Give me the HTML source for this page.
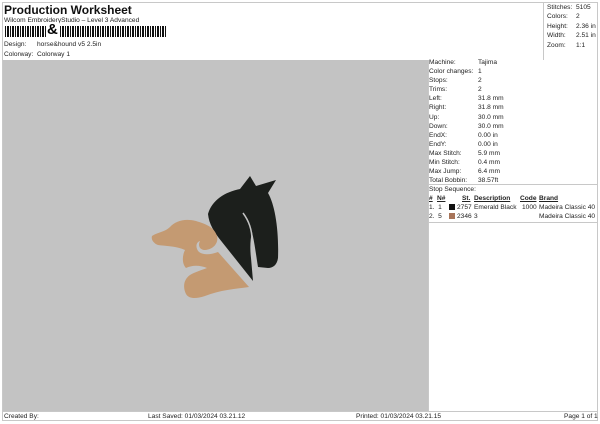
<!DOCTYPE html>
<html><head><style>
*{margin:0;padding:0;box-sizing:border-box}
body{width:600px;height:424px;background:#fff;font-family:"Liberation Sans",sans-serif;color:#222;position:relative;overflow:hidden;font-size:6.6px}
.a{position:absolute;white-space:nowrap}
</style></head><body>
<div class="a" style="left:2px;top:2px;width:596px;height:419px;border:1px solid #c8c8c8"></div>
<div class="a" style="left:543px;top:2px;width:1px;height:58px;background:#c8c8c8"></div>
<div class="a" style="left:4px;top:3px;font-size:12px;font-weight:bold;color:#111">Production Worksheet</div>
<div class="a" style="left:4px;top:17px;">Wilcom EmbroideryStudio – Level 3 Advanced</div>
<div class="a" style="left:5px;top:26px;width:162px;height:11px;background:repeating-linear-gradient(90deg,#111 0 1px,#fff 1px 2px,#111 2px 3px,#111 3px 4px,#fff 4px 5px)"></div>
<div class="a" style="left:47px;top:22px;width:12px;height:16px;background:#fff;font-size:15px;font-weight:bold;line-height:16px;color:#000">&amp;</div>
<div class="a" style="left:4px;top:41px;">Design:</div><div class="a" style="left:37px;top:41px;">horse&amp;hound v5 2.5in</div>
<div class="a" style="left:4px;top:51px;">Colorway:</div><div class="a" style="left:37px;top:51px;">Colorway 1</div>
<div class="a" style="left:547px;top:3px;line-height:9.4px">Stitches:<br>Colors:<br>Height:<br>Width:<br>Zoom:</div>
<div class="a" style="left:576px;top:3px;line-height:9.4px">5105<br>2<br>2.36 in<br>2.51 in<br>1:1</div>
<div class="a" style="left:3px;top:60px;width:425px;height:351px;background:#c3c3c3"></div>
<div class="a" style="left:428px;top:60px;width:1px;height:351px;background:#c8c8c8"></div>
<div class="a" style="left:3px;top:411px;width:594px;height:1px;background:#c8c8c8"></div>
<div class="a" style="left:429px;top:58px;line-height:9.1px">Machine:<br>Color changes:<br>Stops:<br>Trims:<br>Left:<br>Right:<br>Up:<br>Down:<br>EndX:<br>EndY:<br>Max Stitch:<br>Min Stitch:<br>Max Jump:<br>Total Bobbin:</div>
<div class="a" style="left:478px;top:58px;line-height:9.1px">Tajima<br>1<br>2<br>2<br>31.8 mm<br>31.8 mm<br>30.0 mm<br>30.0 mm<br>0.00 in<br>0.00 in<br>5.9 mm<br>0.4 mm<br>6.4 mm<br>38.57ft</div>
<div class="a" style="left:429px;top:184px;width:168px;height:1px;background:#c8c8c8"></div>
<div class="a" style="left:429px;top:186px;">Stop Sequence:</div>
<div class="a" style="left:429px;top:195px;font-weight:bold;text-decoration:underline">#</div>
<div class="a" style="left:437px;top:195px;font-weight:bold;text-decoration:underline">N#</div>
<div class="a" style="left:462px;top:195px;font-weight:bold;text-decoration:underline">St.</div>
<div class="a" style="left:474px;top:195px;font-weight:bold;text-decoration:underline">Description</div>
<div class="a" style="left:520px;top:195px;font-weight:bold;text-decoration:underline">Code</div>
<div class="a" style="left:539px;top:195px;font-weight:bold;text-decoration:underline">Brand</div>
<div class="a" style="left:429px;top:204px;">1.&nbsp; 1</div>
<div class="a" style="left:449px;top:204px;width:6px;height:6px;background:#111"></div>
<div class="a" style="left:457px;top:204px;">2757</div>
<div class="a" style="left:474px;top:204px;">Emerald Black</div>
<div class="a" style="left:522px;top:204px;">1000</div>
<div class="a" style="left:539px;top:204px;">Madeira Classic 40</div>
<div class="a" style="left:429px;top:213px;">2.&nbsp; 5</div>
<div class="a" style="left:449px;top:213px;width:6px;height:6px;background:#a8755a"></div>
<div class="a" style="left:457px;top:213px;">2346</div>
<div class="a" style="left:474px;top:213px;">3</div>
<div class="a" style="left:539px;top:213px;">Madeira Classic 40</div>
<div class="a" style="left:429px;top:222px;width:168px;height:1px;background:#c8c8c8"></div>
<div class="a" style="left:4px;top:413px;">Created By:</div>
<div class="a" style="left:148px;top:413px;">Last Saved: 01/03/2024 03.21.12</div>
<div class="a" style="left:356px;top:413px;">Printed: 01/03/2024 03.21.15</div>
<div class="a" style="left:564px;top:413px;">Page 1 of 1</div>
<svg class="a" style="left:0;top:0" width="600" height="424">
<path fill="#1c1f1c" d="M208 214 C212 200 225 192 240 189 L250 176 L256 186 L276 180 L268 193 C275 205 279 230 278 258 C277 265 273 268 268 268 L258 267 C256 255 255 245 252 232 C250 240 250 250 251 258 L253 281 L222 242 C214 232 209 224 208 214 Z"/>
<path fill="none" stroke="#c3c3c3" stroke-width="1.5" d="M243 213 C249 221 252 230 252 240"/>
<path fill="#c49a72" d="M152 236 C158 232 165 232 170 227 C175 221 185 218 196 221 C206 224 214 227 217 236 C219 244 212 250 204 250 C199 249 198 245 200 241 C196 242 195 248 199 252 C205 256 212 254 218 252 L249 287 C235 289 220 290 205 296 C196 299 189 299 186 294 C183 288 183 280 190 275 C195 272 202 270 207 268 C200 265 192 265 186 268 C182 264 182 256 185 250 C176 246 165 246 158 245 C153 243 151 239 152 236 Z"/>
</svg>
</body></html>
